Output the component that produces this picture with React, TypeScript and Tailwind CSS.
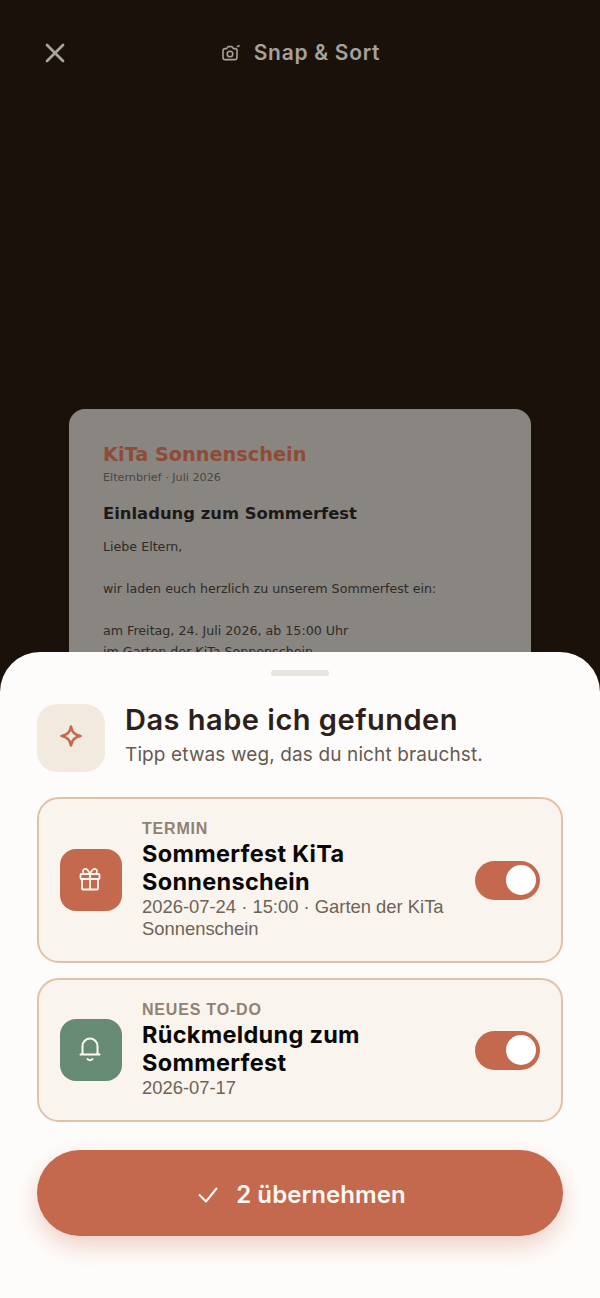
import type { ReactNode } from "react";
import { X } from "lucide-react";

function CameraGlyph() {
  return (
    <svg width="18" height="16" viewBox="0 0 18 16" fill="none" stroke="currentColor" strokeWidth="1.6" strokeLinecap="round" strokeLinejoin="round">
      <path d="M3 3.6h1.6L6 1.6h4l1.4 2h1.6a2 2 0 0 1 2 2v7a2 2 0 0 1-2 2H3a2 2 0 0 1-2-2v-7a2 2 0 0 1 2-2z" />
      <circle cx="8" cy="9" r="2.8" />
      <path d="M15.6 1.4l1.4-.6" />
    </svg>
  );
}

function GiftGlyph() {
  return (
    <svg width="22" height="24" viewBox="0 0 22 24" fill="none" stroke="currentColor" strokeWidth="1.8" strokeLinecap="round" strokeLinejoin="round">
      <path d="M11 7C9.5 3.5 7.5 1.5 5.5 2S3.5 6 5.5 7M11 7c1.500-3.500 3.500-5.500 5.500-5S18.500 6 16.500 7" />
      <rect x="1.500" y="7" width="19" height="5" rx="1" />
      <path d="M3 12v9.500a1 1 0 0 0 1 1h14a1 1 0 0 0 1-1V12" />
      <path d="M11 7v15.500" />
    </svg>
  );
}

function BellGlyph() {
  return (
    <svg width="22" height="26" viewBox="0 0 22 26" fill="none" stroke="currentColor" strokeWidth="2" strokeLinecap="round" strokeLinejoin="round">
      <path d="M3.500 17.500V10a7.500 7.500 0 0 1 15 0v7.500" />
      <path d="M1.500 18.500c1.200-.2 2-.6 2-1M20.500 18.500c-1.200-.2-2-.6-2-1M1.500 18.500h19" />
      <path d="M8.500 23c1.200 1.600 3.800 1.600 5 0" />
    </svg>
  );
}

function CheckGlyph() {
  return (
    <svg width="20" height="16" viewBox="0 0 20 16" fill="none" stroke="currentColor" strokeWidth="2" strokeLinecap="round" strokeLinejoin="round">
      <path d="M1.500 8l6.500 6.500L18.500 1.500" />
    </svg>
  );
}

function SparkGlyph() {
  return (
    <svg width="22" height="22" viewBox="0 0 22 22" fill="none" stroke="#c4694d" strokeWidth="2.500" strokeLinejoin="round">
      <path d="M11 1.500C11.800 7 15 10.200 20.500 11 15 11.800 11.800 15 11 20.500 10.200 15 7 11.800 1.500 11 7 10.200 10.200 7 11 1.500z" />
    </svg>
  );
}

function Toggle() {
  return (
    <div className="w-[65px] h-[39px] rounded-full bg-[#c4694d] flex items-center justify-end pr-1 shrink-0">
      <div className="w-[30px] h-[30px] rounded-full bg-white" />
    </div>
  );
}

function FoundCard({ label, title, meta, tone, icon }: { label: string; title: string; meta: string; tone: string; icon: ReactNode }) {
  return (
    <div className="rounded-[22px] border-2 border-[#e0c2a6] bg-[#f9f4ed] px-[21px] py-[20px] flex items-center">
      <div className={`w-[62px] h-[62px] rounded-[16px] flex items-center justify-center shrink-0 text-[#fdf9f4] pr-[2px] pb-[2px] ${tone}`}>
        {icon}
      </div>
      <div className="ml-5 flex-1 min-w-0 pr-7 font-['Liberation_Sans',sans-serif]">
        <div className="text-[16px] leading-[19px] font-bold tracking-[0.8px] text-[#8f8274] mb-[2px]">{label}</div>
        <div className="font-['Inter',sans-serif] text-[23.500px] leading-[28px] font-bold tracking-[0.3px] text-[#0a0806]">{title}</div>
        <div className="text-[18.400px] leading-[22px] text-[#6e6359] pb-px">{meta}</div>
      </div>
      <Toggle />
    </div>
  );
}

export default function App() {
  return (
    <div className="relative w-[600px] h-[1298px] overflow-hidden bg-[#1a120a]">
      {/* top bar */}
      <div className="h-[106px] flex items-center justify-center relative">
        <X className="absolute left-[39px] top-[37px] text-[#a9a49e]" size={32} strokeWidth={2} />
        <div className="flex items-center gap-[14px] pl-[2px] text-[#a6a199] font-['Inter',sans-serif] text-[21px] font-semibold tracking-[0.7px]">
          <CameraGlyph />
          <span>Snap &amp; Sort</span>
        </div>
      </div>

      {/* scanned letter */}
      <div className="mx-[69px] mt-[303px] h-[500px] rounded-[16px] bg-[#898580] px-[34px] pt-[32px] font-['DejaVu_Sans',sans-serif]">
        <div className="text-[19.300px] leading-[26px] font-bold text-[#8e4c35] pt-px">KiTa Sonnenschein</div>
        <div className="text-[11.200px] leading-[16px] mt-[2px] text-[#4b4743]">Elternbrief · Juli 2026</div>
        <div className="text-[16.400px] leading-[22px] font-bold mt-[17px] text-[#1c1917]">Einladung zum Sommerfest</div>
        <div className="text-[12.650px] leading-[21px] mt-[11px] text-[#2f2b28]">
          <p>Liebe Eltern,</p>
          <p className="mt-[21px]">wir laden euch herzlich zu unserem Sommerfest ein:</p>
          <p className="mt-[21px]">am Freitag, 24. Juli 2026, ab 15:00 Uhr</p>
          <p>im Garten der KiTa Sonnenschein</p>
        </div>
      </div>

      {/* bottom sheet */}
      <div className="absolute left-0 right-0 bottom-0 h-[646px] rounded-t-[40px] bg-[#fefcfa] px-[37px]">
        <div className="w-[58px] h-[6px] rounded-full bg-[#e8e5df] mx-auto mt-[18px]" />
        <div className="flex items-start mt-[28px]">
          <div className="w-[68px] h-[68px] rounded-[20px] bg-[#f3eadf] flex items-center justify-center shrink-0 pb-1">
            <SparkGlyph />
          </div>
          <div className="ml-5 font-['Inter',sans-serif]">
            <div className="text-[29px] leading-[32px] font-semibold tracking-[0.5px] text-[#2b2119]">Das habe ich gefunden</div>
            <div className="text-[19px] leading-[26px] tracking-[0.12px] text-[#665a50] mt-[6px]">Tipp etwas weg, das du nicht brauchst.</div>
          </div>
        </div>

        <div className="flex flex-col gap-[15px] mt-[25px]">
          <FoundCard
            label="TERMIN"
            title="Sommerfest KiTa Sonnenschein"
            meta="2026-07-24 · 15:00 · Garten der KiTa Sonnenschein"
            tone="bg-[#c4694d]"
            icon={<GiftGlyph />}
          />
          <FoundCard
            label="NEUES TO-DO"
            title="Rückmeldung zum Sommerfest"
            meta="2026-07-17"
            tone="bg-[#668a73]"
            icon={<BellGlyph />}
          />
        </div>

        <button className="mt-[28px] w-full h-[86px] rounded-full bg-[#c4694d] shadow-[0_10px_24px_rgba(196,105,77,0.3)] flex items-center justify-center gap-[18px] pl-1 pt-1 text-[#fff9f3] font-['Inter',sans-serif] text-[24px] font-semibold tracking-[0.07px]">
          <CheckGlyph />
          <span>2 übernehmen</span>
        </button>
      </div>
    </div>
  );
}
